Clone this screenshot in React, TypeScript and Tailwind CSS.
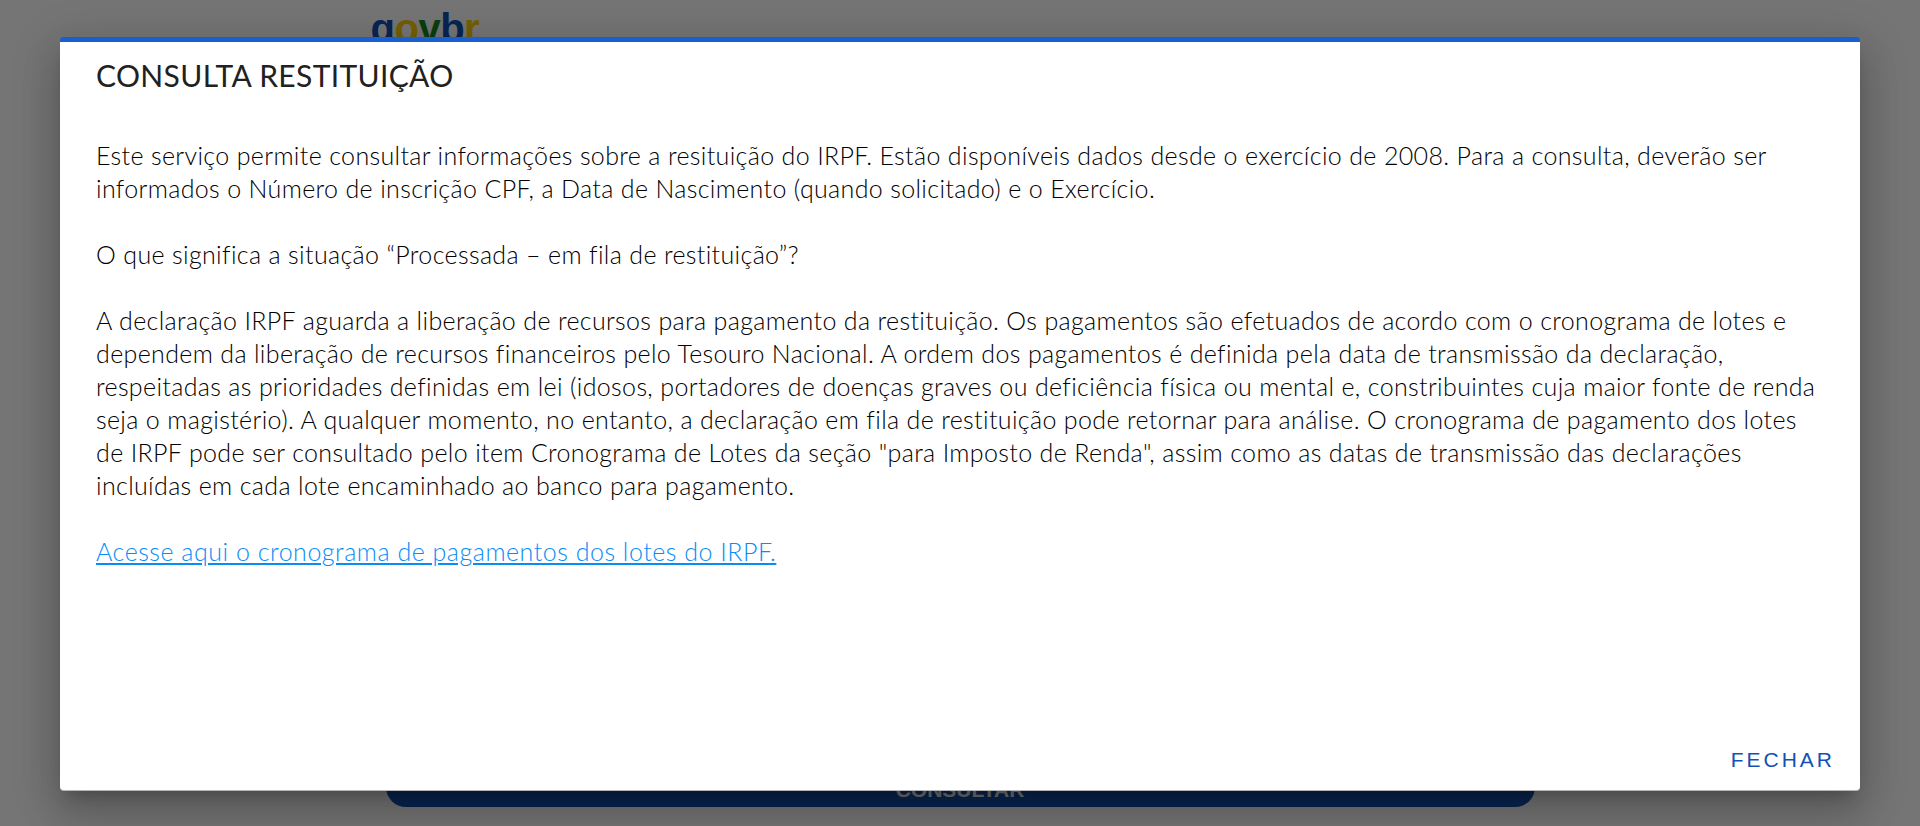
import React from "react";

const body = "font-['Lato','Open_Sans',sans-serif]";

const lines = [
  "Este serviço permite consultar informações sobre a resituição do IRPF. Estão disponíveis dados desde o exercício de 2008. Para a consulta, deverão ser",
  "informados o Número de inscrição CPF, a Data de Nascimento (quando solicitado) e o Exercício.",
];
const details = [
  "A declaração IRPF aguarda a liberação de recursos para pagamento da restituição. Os pagamentos são efetuados de acordo com o cronograma de lotes e",
  "dependem da liberação de recursos financeiros pelo Tesouro Nacional. A ordem dos pagamentos é definida pela data de transmissão da declaração,",
  "respeitadas as prioridades definidas em lei (idosos, portadores de doenças graves ou deficiência física ou mental e, constribuintes cuja maior fonte de renda",
  "seja o magistério). A qualquer momento, no entanto, a declaração em fila de restituição pode retornar para análise. O cronograma de pagamento dos lotes",
  'de IRPF pode ser consultado pelo item Cronograma de Lotes da seção "para Imposto de Renda", assim como as datas de transmissão das declarações',
  "incluídas em cada lote encaminhado ao banco para pagamento.",
];

function Page() {
  return (
    <div className="h-[826px] bg-white flex flex-col items-center overflow-hidden">
      <div className="w-[1149px] mt-[5px]">
        <div className="ml-[-15px] text-[40px] leading-[46px] font-bold font-['Liberation_Sans',sans-serif] tracking-[-0.5px]">
          <span className="text-[#1351b4]">g</span>
          <span className="text-[#ffcd07]">o</span>
          <span className="text-[#168821]">v</span>
          <span className="text-[#1351b4]">b</span>
          <span className="text-[#ffcd07]">r</span>
        </div>
      </div>
      <div className="flex-1" />
      <button className="mb-[19px] w-[1149px] h-[48px] rounded-[20px] bg-[#1351b4] text-white text-[21px] leading-[24px] font-bold font-['Liberation_Sans',sans-serif] flex items-end justify-center pb-[5px]">
        CONSULTAR
      </button>
    </div>
  );
}

export default function App() {
  return (
    <div className="relative h-[826px] overflow-hidden">
      <Page />
      <div className="absolute inset-0 bg-black/[0.54] flex items-start justify-center">
        <div className={`mt-[37px] w-[1800px] h-[754px] bg-white border-t-[5px] border-b border-t-[#1a5fd0] border-b-[#b5b5b5] rounded-[4px] shadow-[0_11px_15px_-7px_rgba(0,0,0,0.2),0_24px_38px_3px_rgba(0,0,0,0.14),0_9px_46px_8px_rgba(0,0,0,0.12)] flex flex-col ${body}`}>
          <h2 className="pl-[36px] pt-[15px] text-[30px] leading-[36px] tracking-[0.35px] text-[#212121] font-normal">CONSULTA RESTITUIÇÃO</h2>
          <div className="flex-1 pl-[36px] pt-[46px] text-[25px] leading-[33px] tracking-[0.35px] font-light text-[#000000] whitespace-nowrap">
            {lines.map((l) => <div key={l}>{l}</div>)}
            <div className="mt-[33px]">O que significa a situação “Processada – em fila de restituição”?</div>
            <div className="mt-[33px]">
              {details.map((l) => <div key={l}>{l}</div>)}
            </div>
            <div className="mt-[33px]">
              <a href="#" className="text-[#0a8cf5] underline tracking-[0.52px]">Acesse aqui o cronograma de pagamentos dos lotes do IRPF.</a>
            </div>
          </div>
          <div className="flex justify-end pr-[25px] pb-[18px]">
            <button className="text-[21px] leading-[24px] tracking-[3px] text-[#1351b4] font-['Liberation_Sans',sans-serif]">FECHAR</button>
          </div>
        </div>
      </div>
    </div>
  );
}
